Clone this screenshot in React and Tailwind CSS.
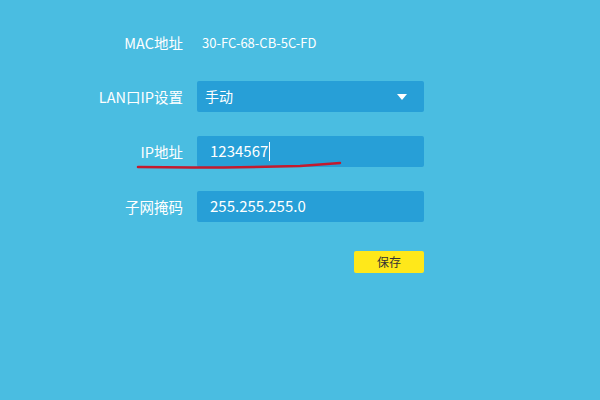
import React from "react";

export default function App() {
  const font = { fontFamily: '"Noto Sans CJK SC", "Liberation Sans", sans-serif' };
  return (
    <div className="relative w-[600px] h-[400px] bg-[#4abde1] overflow-hidden text-white" style={font}>
      <div className="flex flex-col pt-[27px]">
        <div className="flex items-center h-[31px]">
          <div className="w-[183px] text-right text-[14.5px]">MAC地址</div>
          <div className="ml-[19px] text-[13px]">30-FC-68-CB-5C-FD</div>
        </div>
        <div className="flex items-center h-[31px] mt-[23px]">
          <div className="w-[183px] text-right text-[14.5px]">LAN口IP设置</div>
          <div className="ml-[14px] w-[227px] h-[31px] rounded-[2px] bg-[#279fd7] flex items-center justify-between pl-[8px] pr-[17px]">
            <span className="text-[14px]">手动</span>
            <span className="w-0 h-0 border-l-[5px] border-r-[5px] border-t-[6px] border-l-transparent border-r-transparent border-t-white"></span>
          </div>
        </div>
        <div className="flex items-center h-[31px] mt-[24px]">
          <div className="w-[183px] text-right text-[14.5px]">IP地址</div>
          <div className="ml-[14px] w-[227px] h-[31px] rounded-[2px] bg-[#279fd7] flex items-center pl-[13px]">
            <span className="text-[15px]">1234567</span>
            <span className="w-px h-[19px] bg-white ml-[1px]"></span>
          </div>
        </div>
        <div className="flex items-center h-[31px] mt-[24px]">
          <div className="w-[183px] text-right text-[14.5px]">子网掩码</div>
          <div className="ml-[14px] w-[227px] h-[31px] rounded-[2px] bg-[#279fd7] flex items-center pl-[13px]">
            <span className="text-[15px]">255.255.255.0</span>
          </div>
        </div>
        <div className="flex mt-[29px] pl-[354px]">
          <div className="w-[70px] h-[22px] rounded-[2px] bg-[#ffe81a] flex items-center justify-center text-[12px] text-[#333]">保存</div>
        </div>
      </div>
      <svg className="absolute left-0 top-0" width="600" height="400">
        <path d="M138 167 C 200 168, 260 167, 300 166 C 315 165, 325 164, 340 163" stroke="#c41a2e" strokeWidth="2.5" fill="none" strokeLinecap="round" />
      </svg>
    </div>
  );
}
